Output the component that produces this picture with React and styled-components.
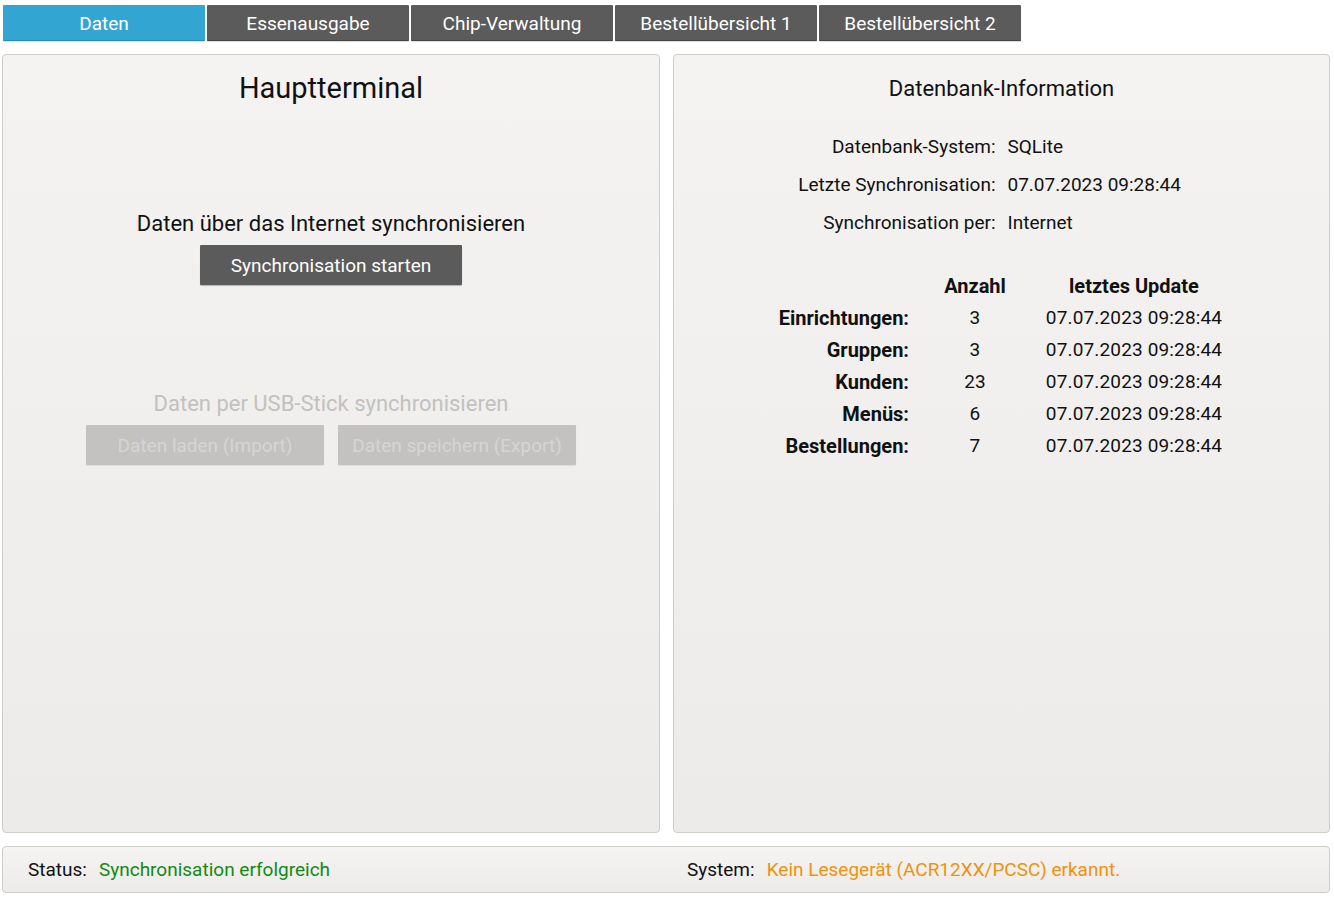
import React from "react";
import styled, { createGlobalStyle } from "styled-components";

const GlobalStyle = createGlobalStyle`
  html, body {
    margin: 0;
    padding: 0;
    background: #ffffff;
    font-family: Roboto, "Liberation Sans", sans-serif;
    color: #111;
  }
`;

const Page = styled.div`
  display: flex;
  flex-direction: column;
  gap: 13px;
  padding: 5px 4px 0 2px;
  height: 898px;
  box-sizing: border-box;
`;

const TabBar = styled.div`
  display: flex;
  gap: 2px;
  padding-left: 1px;
`;

const Tab = styled.div`
  width: 202px;
  height: 36px;
  box-sizing: border-box;
  padding-top: 2px;
  display: flex;
  align-items: center;
  justify-content: center;
  font-size: 19px;
  color: #fff;
  background: ${(p) => (p.active ? "#33a5d3" : "#5b5b5b")};
  border-bottom: 1px solid ${(p) => (p.active ? "#2a8cb4" : "#444")};
  box-shadow: 0 1px 1px rgba(0, 0, 0, 0.15);
  border-radius: 1px;
`;

const Columns = styled.div`
  display: grid;
  grid-template-columns: 658px 657px;
  gap: 13px;
  height: 779px;
`;

const Panel = styled.div`
  border: 1px solid #cfcdca;
  border-radius: 4px;
  background: linear-gradient(#f4f3f1, #ecebe9);
  display: flex;
  flex-direction: column;
  align-items: center;
  box-sizing: border-box;
`;

const BigTitle = styled.h1`
  margin: 15px 0 0;
  font-size: 29px;
  font-weight: 400;
  line-height: 36px;
`;

const SmallTitle = styled.h2`
  margin: 20px 0 0;
  font-size: 22px;
  font-weight: 400;
  line-height: 28px;
`;

const SectionLabel = styled.div`
  font-size: 22px;
  line-height: 26px;
  margin-top: ${(p) => p.top}px;
  color: ${(p) => (p.disabled ? "#c2c1bf" : "#111")};
`;

const ButtonRow = styled.div`
  display: flex;
  gap: 14px;
  margin-top: 8px;
`;

const Button = styled.button`
  width: ${(p) => p.w}px;
  height: 40px;
  border: none;
  border-radius: 1px;
  font-family: inherit;
  font-size: 19px;
  color: ${(p) => (p.disabled ? "#d6d5d3" : "#fff")};
  background: ${(p) => (p.disabled ? "#c3c2c0" : "#5b5b5b")};
  box-shadow: 0 1px 1px rgba(0, 0, 0, ${(p) => (p.disabled ? 0.08 : 0.25)});
  padding: 0;
`;

const InfoGrid = styled.div`
  display: grid;
  grid-template-columns: 1fr 1fr;
  column-gap: 12px;
  row-gap: 14px;
  width: 100%;
  margin-top: 32px;
  font-size: 19px;
  line-height: 24px;
`;

const InfoLabel = styled.div`
  text-align: right;
`;

const StatsTable = styled.div`
  display: grid;
  grid-template-columns: 235px 132px 186px;
  row-gap: 8px;
  align-self: flex-start;
  margin-top: 39px;
  font-size: 19px;
  line-height: 24px;
  letter-spacing: 0.15px;
`;

const Head = styled.div`
  font-weight: 700;
  font-size: 20px;
  text-align: center;
  letter-spacing: 0;
`;

const RowLabel = styled.div`
  font-weight: 700;
  font-size: 20px;
  text-align: right;
  letter-spacing: 0;
`;

const Cell = styled.div`
  text-align: center;
`;

const StatusBar = styled.div`
  display: grid;
  grid-template-columns: 1fr 1fr;
  height: 47px;
  border: 1px solid #cfcdca;
  border-radius: 4px;
  background: linear-gradient(#f5f4f2, #ecebe9);
  box-sizing: border-box;
  font-size: 19px;
`;

const StatusItem = styled.div`
  display: flex;
  align-items: center;
  gap: 12px;
  padding-left: ${(p) => p.pad}px;
`;

const StatusValue = styled.span`
  color: ${(p) => p.color};
`;

const tabs = ["Daten", "Essenausgabe", "Chip-Verwaltung", "Bestellübersicht 1", "Bestellübersicht 2"];

const stamp = "07.07.2023 09:28:44";
const stats = [
  ["Einrichtungen:", 3],
  ["Gruppen:", 3],
  ["Kunden:", 23],
  ["Menüs:", 6],
  ["Bestellungen:", 7],
];

export default function App() {
  return (
    <>
      <GlobalStyle />
      <Page>
        <TabBar>
          {tabs.map((t, i) => (
            <Tab key={t} active={i === 0}>
              {t}
            </Tab>
          ))}
        </TabBar>
        <Columns>
          <Panel>
            <BigTitle>Hauptterminal</BigTitle>
            <SectionLabel top={105}>Daten über das Internet synchronisieren</SectionLabel>
            <ButtonRow>
              <Button w={262}>Synchronisation starten</Button>
            </ButtonRow>
            <SectionLabel top={106} disabled>
              Daten per USB-Stick synchronisieren
            </SectionLabel>
            <ButtonRow>
              <Button w={238} disabled>
                Daten laden (Import)
              </Button>
              <Button w={238} disabled>
                Daten speichern (Export)
              </Button>
            </ButtonRow>
          </Panel>
          <Panel>
            <SmallTitle>Datenbank-Information</SmallTitle>
            <InfoGrid>
              <InfoLabel>Datenbank-System:</InfoLabel>
              <div>SQLite</div>
              <InfoLabel>Letzte Synchronisation:</InfoLabel>
              <div>{stamp}</div>
              <InfoLabel>Synchronisation per:</InfoLabel>
              <div>Internet</div>
            </InfoGrid>
            <StatsTable>
              <div />
              <Head>Anzahl</Head>
              <Head>letztes Update</Head>
              {stats.map(([label, n]) => (
                <React.Fragment key={label}>
                  <RowLabel>{label}</RowLabel>
                  <Cell>{n}</Cell>
                  <Cell>{stamp}</Cell>
                </React.Fragment>
              ))}
            </StatsTable>
          </Panel>
        </Columns>
        <StatusBar>
          <StatusItem pad={25}>
            Status:
            <StatusValue color="#128a12">Synchronisation erfolgreich</StatusValue>
          </StatusItem>
          <StatusItem pad={21}>
            System:
            <StatusValue color="#f0920a">Kein Lesegerät (ACR12XX/PCSC) erkannt.</StatusValue>
          </StatusItem>
        </StatusBar>
      </Page>
    </>
  );
}
